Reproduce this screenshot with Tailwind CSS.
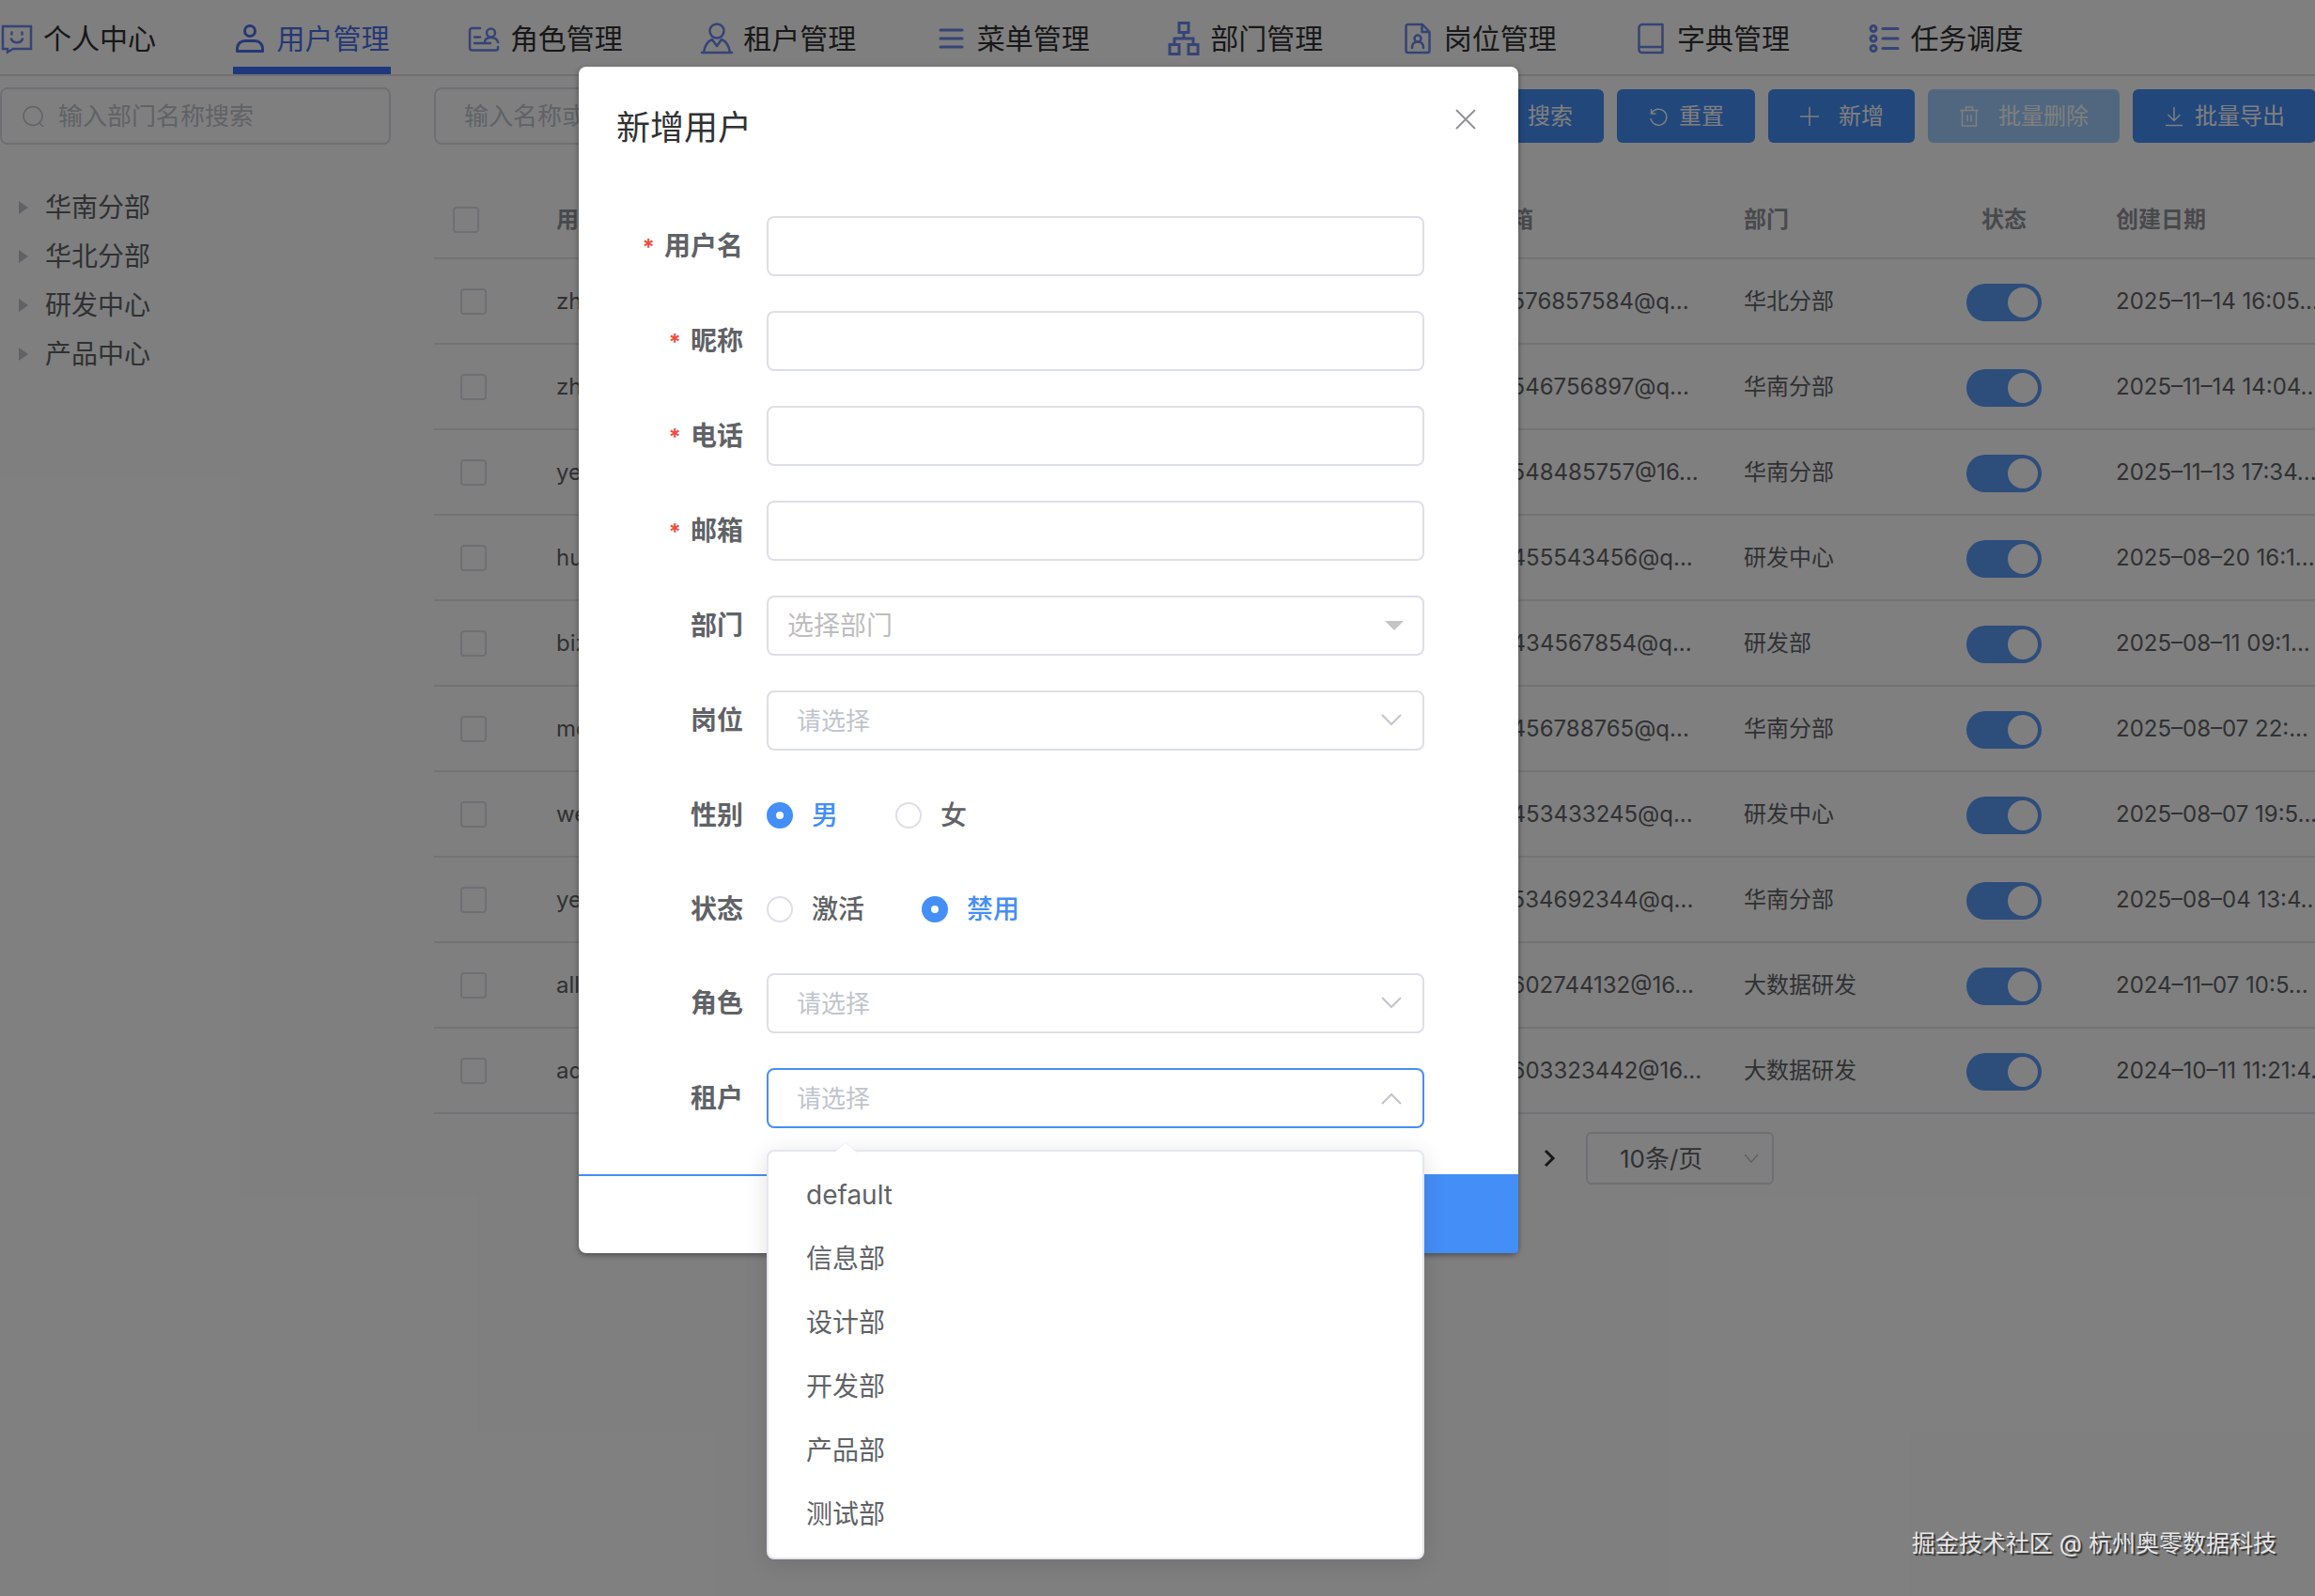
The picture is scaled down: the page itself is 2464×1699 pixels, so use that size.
<!DOCTYPE html>
<html lang="zh-CN">
<head>
  <meta charset="UTF-8" />
  <meta name="viewport" content="width=device-width, initial-scale=1" />
  <title>用户管理</title>
  <script src="https://cdn.jsdelivr.net/npm/@tailwindcss/browser@4"></script>
</head>
<body class="min-h-screen overflow-hidden bg-white font-['Inter','Noto_Sans_CJK_SC',sans-serif] text-[#606266]">
  <div class="relative h-screen overflow-hidden">

    <!-- Navigation -->
    <nav class="h-[81px] border-b-2 border-[#e0e2e6] text-[30px] leading-9 text-[#303133]">
      <div class="grid h-full w-[2236px] grid-cols-9">
        <a href="#" class="flex w-[168px] items-center gap-[10px] border-b-8 border-transparent pt-[10px] whitespace-nowrap">
          <svg class="size-9 shrink-0 text-[#6a88ea]" viewBox="0 0 36 36" fill="none" stroke="currentColor" stroke-width="2.5"><path d="M3 5H33V29H14L8 32.500V29H3Z"/><path d="M12.500 11.500v2M23.500 11.500v2M12 18.500c2 5 10 5 12 0" stroke-linecap="round"/></svg>
          个人中心
        </a>
        <a href="#" class="flex w-[168px] items-center gap-[10px] border-b-8 border-[#3f70fa] pt-[10px] whitespace-nowrap text-[#4a70ea]">
          <svg class="size-9 shrink-0" viewBox="0 0 36 36" fill="none" stroke="currentColor" stroke-width="3"><circle cx="18" cy="10" r="5.500"/><path d="M4.500 31.500v-3a8 8 0 0 1 8-8h11a8 8 0 0 1 8 8v3z" stroke-linejoin="round"/></svg>
          用户管理
        </a>
        <a href="#" class="flex w-[168px] items-center gap-[10px] border-b-8 border-transparent pt-[10px] whitespace-nowrap">
          <svg class="size-9 shrink-0 text-[#6a88ea]" viewBox="0 0 36 36" fill="none" stroke="currentColor" stroke-width="2.500" stroke-linecap="round"><path d="M14 7H5.500A2.500 2.500 0 0 0 3 9.500V28a2.500 2.500 0 0 0 2.500 2.500H31a2 2 0 0 0 2-2V27"/><circle cx="25.500" cy="12" r="4.500"/><path d="M19 22c0-3 2-5 6.500-5s7 2.500 7.500 5M8 16.500h6M8 23h17"/></svg>
          角色管理
        </a>
        <a href="#" class="flex w-[168px] items-center gap-[10px] border-b-8 border-transparent pt-[10px] whitespace-nowrap">
          <svg class="size-9 shrink-0 text-[#6a88ea]" viewBox="0 0 36 36" fill="none" stroke="currentColor" stroke-width="2.500" stroke-linecap="round" stroke-linejoin="round"><circle cx="18" cy="10" r="7.500"/><path d="M2 33h32M4 33c1-7 4-12 9-14l5 7 5-7c5 2 8 7 9 14"/></svg>
          租户管理
        </a>
        <a href="#" class="flex w-[168px] items-center gap-[10px] border-b-8 border-transparent pt-[10px] whitespace-nowrap">
          <svg class="size-9 shrink-0 text-[#6a88ea]" viewBox="0 0 36 36" fill="none" stroke="currentColor" stroke-width="3" stroke-linecap="round"><path d="M7 9h23M7 18h23M7 27h23"/></svg>
          菜单管理
        </a>
        <a href="#" class="flex w-[168px] items-center gap-[10px] border-b-8 border-transparent pt-[10px] whitespace-nowrap">
          <svg class="size-9 shrink-0 text-[#6a88ea]" viewBox="0 0 36 36" fill="none" stroke="currentColor" stroke-width="3"><path d="M13 1.500h10v10H13zM3 24.500h10v10H3zM23 24.500h10v10H23zM18 11.500V18M8 24.500V18h20v6.500"/></svg>
          部门管理
        </a>
        <a href="#" class="flex w-[168px] items-center gap-[10px] border-b-8 border-transparent pt-[10px] whitespace-nowrap">
          <svg class="size-9 shrink-0 text-[#6a88ea]" viewBox="0 0 36 36" fill="none" stroke="currentColor" stroke-width="2.500" stroke-linejoin="round"><path d="M23 3H7.500A2 2 0 0 0 5.500 5V31a2 2 0 0 0 2 2h21a2 2 0 0 0 2-2V11zM22.500 3v8h8"/><circle cx="18" cy="18" r="3.500"/><path d="M12 28c0-4 2-6.500 6-6.500s6 2.500 6 6.500" stroke-linecap="round"/></svg>
          岗位管理
        </a>
        <a href="#" class="flex w-[168px] items-center gap-[10px] border-b-8 border-transparent pt-[10px] whitespace-nowrap">
          <svg class="size-9 shrink-0 text-[#6a88ea]" viewBox="0 0 36 36" fill="none" stroke="currentColor" stroke-width="2.500" stroke-linejoin="round"><path d="M30.500 3H9a3.500 3.500 0 0 0-3.500 3.500V30A3 3 0 0 0 8.500 33H30.500zM5.500 27h25"/></svg>
          字典管理
        </a>
        <a href="#" class="flex w-[168px] items-center gap-[10px] border-b-8 border-transparent pt-[10px] whitespace-nowrap">
          <svg class="size-9 shrink-0 text-[#6a88ea]" viewBox="0 0 36 36" fill="none" stroke="currentColor" stroke-width="3" stroke-linecap="round"><circle cx="6" cy="7.500" r="3"/><circle cx="6" cy="18" r="3"/><circle cx="6" cy="28.500" r="3"/><path d="M16 7.500h16M16 18h16M16 28.500h16"/></svg>
          任务调度
        </a>
      </div>
    </nav>

    <div class="flex gap-[46px] pt-3">
      <!-- Department tree -->
      <aside class="w-[416px] shrink-0">
        <label class="flex h-[61px] items-center gap-[14px] rounded-lg border-2 border-[#dcdfe6] pl-[22px]">
          <svg class="size-6 shrink-0 text-[#c0c4cc]" viewBox="0 0 24 24" fill="none" stroke="currentColor" stroke-width="1.500"><circle cx="11" cy="11.500" r="10"/><path d="M18 19l4 4"/></svg>
          <input type="text" aria-label="部门名称" placeholder="输入部门名称搜索" class="w-full min-w-0 text-[26px] outline-none placeholder:text-[#c0c4cc]" />
        </label>
        <ul class="pt-[41px] text-[28px] leading-[52px]">
          <li class="flex items-center gap-[18px] pl-5"><span class="h-0 w-0 border-y-[7px] border-l-[10px] border-y-transparent border-l-[#c0c4cc]"></span>华南分部</li>
          <li class="flex items-center gap-[18px] pl-5"><span class="h-0 w-0 border-y-[7px] border-l-[10px] border-y-transparent border-l-[#c0c4cc]"></span>华北分部</li>
          <li class="flex items-center gap-[18px] pl-5"><span class="h-0 w-0 border-y-[7px] border-l-[10px] border-y-transparent border-l-[#c0c4cc]"></span>研发中心</li>
          <li class="flex items-center gap-[18px] pl-5"><span class="h-0 w-0 border-y-[7px] border-l-[10px] border-y-transparent border-l-[#c0c4cc]"></span>产品中心</li>
        </ul>
      </aside>

      <main class="shrink-0">
        <!-- Toolbar -->
        <div class="flex h-[61px] items-center gap-[14px] text-2xl text-white">
          <input type="text" aria-label="名称或邮箱" placeholder="输入名称或邮箱搜索" class="h-[61px] w-[535px] shrink-0 rounded-lg border-2 border-[#dcdfe6] px-[30px] text-[26px] text-[#606266] placeholder:text-[#c0c4cc]" />
          <input type="text" aria-label="创建日期" placeholder="创建日期" class="h-[61px] w-[535px] shrink-0 rounded-lg border-2 border-[#dcdfe6] px-[30px] text-[26px] text-[#606266] placeholder:text-[#c0c4cc]" />
          <button class="flex h-[57px] shrink-0 items-center gap-[11px] rounded-md bg-[#448ef7] px-[33px]">
            <svg class="size-[22px]" viewBox="0 0 22 22" fill="none" stroke="currentColor" stroke-width="1.500"><circle cx="10" cy="10" r="8"/><path d="M16 16l4 4"/></svg>搜索
          </button>
          <button class="flex h-[57px] shrink-0 items-center gap-[11px] rounded-md bg-[#448ef7] px-[33px]">
            <svg class="size-[22px]" viewBox="0 0 22 22" fill="none" stroke="currentColor" stroke-width="1.500"><path d="M3.500 3v5h5M4 7.500A8.500 8.500 0 1 1 3 13"/></svg>重置
          </button>
          <button class="flex h-[57px] shrink-0 items-center gap-5 rounded-md bg-[#448ef7] px-[33px]">
            <svg class="size-[22px]" viewBox="0 0 22 22" fill="none" stroke="currentColor" stroke-width="1.500"><path d="M11 1v20M1 11h20"/></svg>新增
          </button>
          <button disabled class="flex h-[57px] shrink-0 items-center gap-5 rounded-md bg-[#a0cfff] px-[33px]">
            <svg class="size-[22px]" viewBox="0 0 22 22" fill="none" stroke="currentColor" stroke-width="1.500"><path d="M1 4.500h20M3.500 4.500V21h15V4.500M7.500 4V1h7v3M9 9v7.500M13 9v7.500"/></svg>批量删除
          </button>
          <button class="flex h-[57px] shrink-0 items-center gap-[11px] rounded-md bg-[#448ef7] px-[33px]">
            <svg class="size-[22px]" viewBox="0 0 22 22" fill="none" stroke="currentColor" stroke-width="1.500"><path d="M11 1v14M4.500 9l6.500 6.500L17.500 9M2 20.500h18"/></svg>批量导出
          </button>
        </div>

        <!-- User table -->
        <table class="mt-[39px] w-[2040px] table-fixed border-collapse text-2xl">
          <thead>
            <tr class="h-[82px] border-b-2 border-[#e4e7ed] text-left text-[#909399]">
              <th class="w-[130px] pl-5 align-middle"><input type="checkbox" aria-label="全选" class="block size-7 appearance-none rounded border-2 border-[#dcdfe6]" /></th>
              <th class="w-[992px] font-bold">用户名</th>
              <th class="w-[272px] font-bold">邮箱</th>
              <th class="w-[237px] font-bold">部门</th>
              <th class="w-[80px] text-center font-bold">状态</th>
              <th class="pl-[79px] font-bold">创建日期</th>
            </tr>
          </thead>
          <tbody id="userRows"></tbody>
        </table>

        <!-- Pagination -->
        <div class="ml-[1179px] mt-[19px] flex items-center gap-[31px]">
          <button aria-label="下一页" class="text-[#303133]">
            <svg class="h-[22px] w-4" viewBox="0 0 16 22" fill="none" stroke="currentColor" stroke-width="3"><path d="M4 3l8 8-8 8"/></svg>
          </button>
          <label class="relative block">
            <select aria-label="每页条数" class="h-14 w-[200px] appearance-none rounded-md border-2 border-[#dcdfe6] pl-[34px] text-[26px]"><option>10条/页</option></select>
            <svg class="absolute top-5 right-4 size-4 text-[#c0c4cc]" viewBox="0 0 16 16" fill="none" stroke="currentColor" stroke-width="1.500"><path d="M1 4l7 8 7-8"/></svg>
          </label>
        </div>
      </main>
    </div>

    <!-- New user dialog -->
    <div class="absolute inset-0 bg-black/50 pt-[71px]">
      <div role="dialog" aria-labelledby="dialogTitle" class="ml-[25%] w-[1000px] rounded-lg bg-white shadow-[0_2px_6px_rgba(0,0,0,0.4)]">
        <header class="flex h-[159px] items-start justify-between pt-[41px] pr-[45px] pl-10">
          <h2 id="dialogTitle" class="text-4xl leading-[48px] text-[#303133]">新增用户</h2>
          <button aria-label="关闭" class="mt-1 text-[#909399]">
            <svg class="size-[22px]" viewBox="0 0 22 22" fill="none" stroke="currentColor" stroke-width="2"><path d="M1 1l20 20M21 1L1 21"/></svg>
          </button>
        </header>

        <form class="flex flex-col gap-[37px] pr-[100px] text-[28px]">
          <div class="flex h-16 items-center">
            <label for="username" class="w-[200px] shrink-0 pr-[25px] text-right font-bold"><span class="mr-[10px] text-2xl text-[#f04e43]">*</span>用户名</label>
            <input id="username" type="text" class="h-16 w-full rounded-lg border-2 border-[#dcdfe6] px-[30px]" />
          </div>
          <div class="flex h-16 items-center">
            <label for="nickname" class="w-[200px] shrink-0 pr-[25px] text-right font-bold"><span class="mr-[10px] text-2xl text-[#f04e43]">*</span>昵称</label>
            <input id="nickname" type="text" class="h-16 w-full rounded-lg border-2 border-[#dcdfe6] px-[30px]" />
          </div>
          <div class="flex h-16 items-center">
            <label for="phone" class="w-[200px] shrink-0 pr-[25px] text-right font-bold"><span class="mr-[10px] text-2xl text-[#f04e43]">*</span>电话</label>
            <input id="phone" type="tel" class="h-16 w-full rounded-lg border-2 border-[#dcdfe6] px-[30px]" />
          </div>
          <div class="flex h-16 items-center">
            <label for="email" class="w-[200px] shrink-0 pr-[25px] text-right font-bold"><span class="mr-[10px] text-2xl text-[#f04e43]">*</span>邮箱</label>
            <input id="email" type="email" class="h-16 w-full rounded-lg border-2 border-[#dcdfe6] px-[30px]" />
          </div>
          <div class="flex h-16 items-center">
            <label for="dept" class="w-[200px] shrink-0 pr-[25px] text-right font-bold">部门</label>
            <div class="relative w-full">
              <select id="dept" class="block h-16 w-full appearance-none rounded-lg border-2 border-[#dcdfe6] pl-5 text-[#bdbdbd]"><option>选择部门</option></select>
              <span class="absolute top-[27px] right-[22px] border-x-[10px] border-t-[10px] border-x-transparent border-t-[#c4c4c4]"></span>
            </div>
          </div>
          <div class="flex h-16 items-center">
            <label for="post" class="w-[200px] shrink-0 pr-[25px] text-right font-bold">岗位</label>
            <div class="relative w-full">
              <select id="post" class="block h-16 w-full appearance-none rounded-lg border-2 border-[#dcdfe6] pl-[30px] text-[26px] text-[#c0c4cc]"><option>请选择</option></select>
              <svg class="absolute top-5 right-6 size-[22px] text-[#c0c4cc]" viewBox="0 0 22 22" fill="none" stroke="currentColor" stroke-width="2"><path d="M1 6l10 10L21 6"/></svg>
            </div>
          </div>
          <div role="radiogroup" aria-labelledby="genderLabel" class="flex h-[63px] items-center">
            <span id="genderLabel" class="w-[200px] shrink-0 pr-[25px] text-right font-bold">性别</span>
            <div class="flex gap-[61px]">
              <label class="flex items-center gap-5 font-medium text-[#448ef7]"><input type="radio" name="gender" checked class="size-7 appearance-none rounded-full border-2 border-[#dcdfe6] checked:border-[10px] checked:border-[#448ef7]" />男</label>
              <label class="flex items-center gap-5 font-medium"><input type="radio" name="gender" class="size-7 appearance-none rounded-full border-2 border-[#dcdfe6] checked:border-[10px] checked:border-[#448ef7]" />女</label>
            </div>
          </div>
          <div role="radiogroup" aria-labelledby="statusLabel" class="flex h-[63px] items-center">
            <span id="statusLabel" class="w-[200px] shrink-0 pr-[25px] text-right font-bold">状态</span>
            <div class="flex gap-[61px]">
              <label class="flex items-center gap-5 font-medium"><input type="radio" name="status" class="size-7 appearance-none rounded-full border-2 border-[#dcdfe6] checked:border-[10px] checked:border-[#448ef7]" />激活</label>
              <label class="flex items-center gap-5 font-medium text-[#448ef7]"><input type="radio" name="status" checked class="size-7 appearance-none rounded-full border-2 border-[#dcdfe6] checked:border-[10px] checked:border-[#448ef7]" />禁用</label>
            </div>
          </div>
          <div class="flex h-16 items-center">
            <label for="role" class="w-[200px] shrink-0 pr-[25px] text-right font-bold">角色</label>
            <div class="relative w-full">
              <select id="role" class="block h-16 w-full appearance-none rounded-lg border-2 border-[#dcdfe6] pl-[30px] text-[26px] text-[#c0c4cc]"><option>请选择</option></select>
              <svg class="absolute top-5 right-6 size-[22px] text-[#c0c4cc]" viewBox="0 0 22 22" fill="none" stroke="currentColor" stroke-width="2"><path d="M1 6l10 10L21 6"/></svg>
            </div>
          </div>
          <div class="flex h-16 items-center">
            <label for="tenant" class="w-[200px] shrink-0 pr-[25px] text-right font-bold">租户</label>
            <div class="relative w-full">
              <select id="tenant" class="block h-16 w-full appearance-none rounded-lg border-2 border-[#448ef7] pl-[30px] text-[26px] text-[#c0c4cc]"><option>请选择</option></select>
              <svg class="absolute top-[22px] right-6 size-[22px] text-[#c0c4cc]" viewBox="0 0 22 22" fill="none" stroke="currentColor" stroke-width="2"><path d="M1 16L11 6l10 10"/></svg>
              <!-- Open tenant menu -->
              <div class="absolute top-[87px] right-0 left-0 z-10 rounded-lg border-2 border-[#e4e7ed] bg-white pt-[12px] pb-[12px] shadow-[0_4px_24px_rgba(0,0,0,0.12)]">
                <svg class="absolute -top-[11px] left-[70px] h-3 w-6" viewBox="0 0 24 12" fill="white" stroke="#ebeef5" stroke-width="1"><path d="M0 12L12 1l12 11"/></svg>
                <ul role="listbox" aria-label="租户" class="leading-[68px]">
                  <li role="option" class="pl-10">default</li>
                  <li role="option" class="pl-10">信息部</li>
                  <li role="option" class="pl-10">设计部</li>
                  <li role="option" class="pl-10">开发部</li>
                  <li role="option" class="pl-10">产品部</li>
                  <li role="option" class="pl-10">测试部</li>
                </ul>
              </div>
            </div>
          </div>
        </form>

        <footer class="mt-[49px] grid h-[84px] grid-cols-2 text-[28px]">
          <button class="rounded-bl-lg border-t-2 border-[#448ef7] pr-[60px] text-[#448ef7]"><span class="sr-only">取消</span></button>
          <button class="rounded-br-sm bg-[#448ef7] text-white"><span class="sr-only">确定</span></button>
        </footer>
      </div>
    </div>

    <p class="absolute right-[41px] bottom-[38px] text-[25px] leading-9 text-[#e6e6e6] [text-shadow:2px_2px_1px_rgba(0,0,0,0.6)]">掘金技术社区 @ 杭州奥零数据科技</p>
  </div>

  <script>
    const users = [
      ['zhangsan', '13576857584@q...', '华北分部', '2025–11–14 16:05...'],
      ['zhaoliu', '13546756897@q...', '华南分部', '2025–11–14 14:04...'],
      ['yehua', '13548485757@16...', '华南分部', '2025–11–13 17:34...'],
      ['huangli', '13455543456@q...', '研发中心', '2025–08–20 16:1...'],
      ['bizhi', '13434567854@q...', '研发部', '2025–08–11 09:1...'],
      ['meng', '13456788765@q...', '华南分部', '2025–08–07 22:...'],
      ['wei', '13453433245@q...', '研发中心', '2025–08–07 19:5...'],
      ['yewen', '13534692344@q...', '华南分部', '2025–08–04 13:4...'],
      ['allen', '13602744132@16...', '大数据研发', '2024–11–07 10:5...'],
      ['admin', '13603323442@16...', '大数据研发', '2024–10–11 11:21:4...'],
    ];

    document.getElementById('userRows').innerHTML = users.map(([name, email, dept, date]) => `
      <tr class="h-[91px] border-b-2 border-[#e4e7ed] whitespace-nowrap">
        <td class="pl-7"><input type="checkbox" aria-label="选择 ${name}" class="block size-7 appearance-none rounded border-2 border-[#dcdfe6]" /></td>
        <td>${name}</td>
        <td>${email}</td>
        <td>${dept}</td>
        <td><input type="checkbox" role="switch" checked aria-label="${name} 状态" class="mt-[3px] block h-10 w-20 appearance-none rounded-full bg-[#5b9bf6] p-1 before:ml-auto before:block before:size-8 before:rounded-full before:bg-white" /></td>
        <td class="pl-[79px]">${date}</td>
      </tr>`).join('');
  </script>
</body>
</html>
